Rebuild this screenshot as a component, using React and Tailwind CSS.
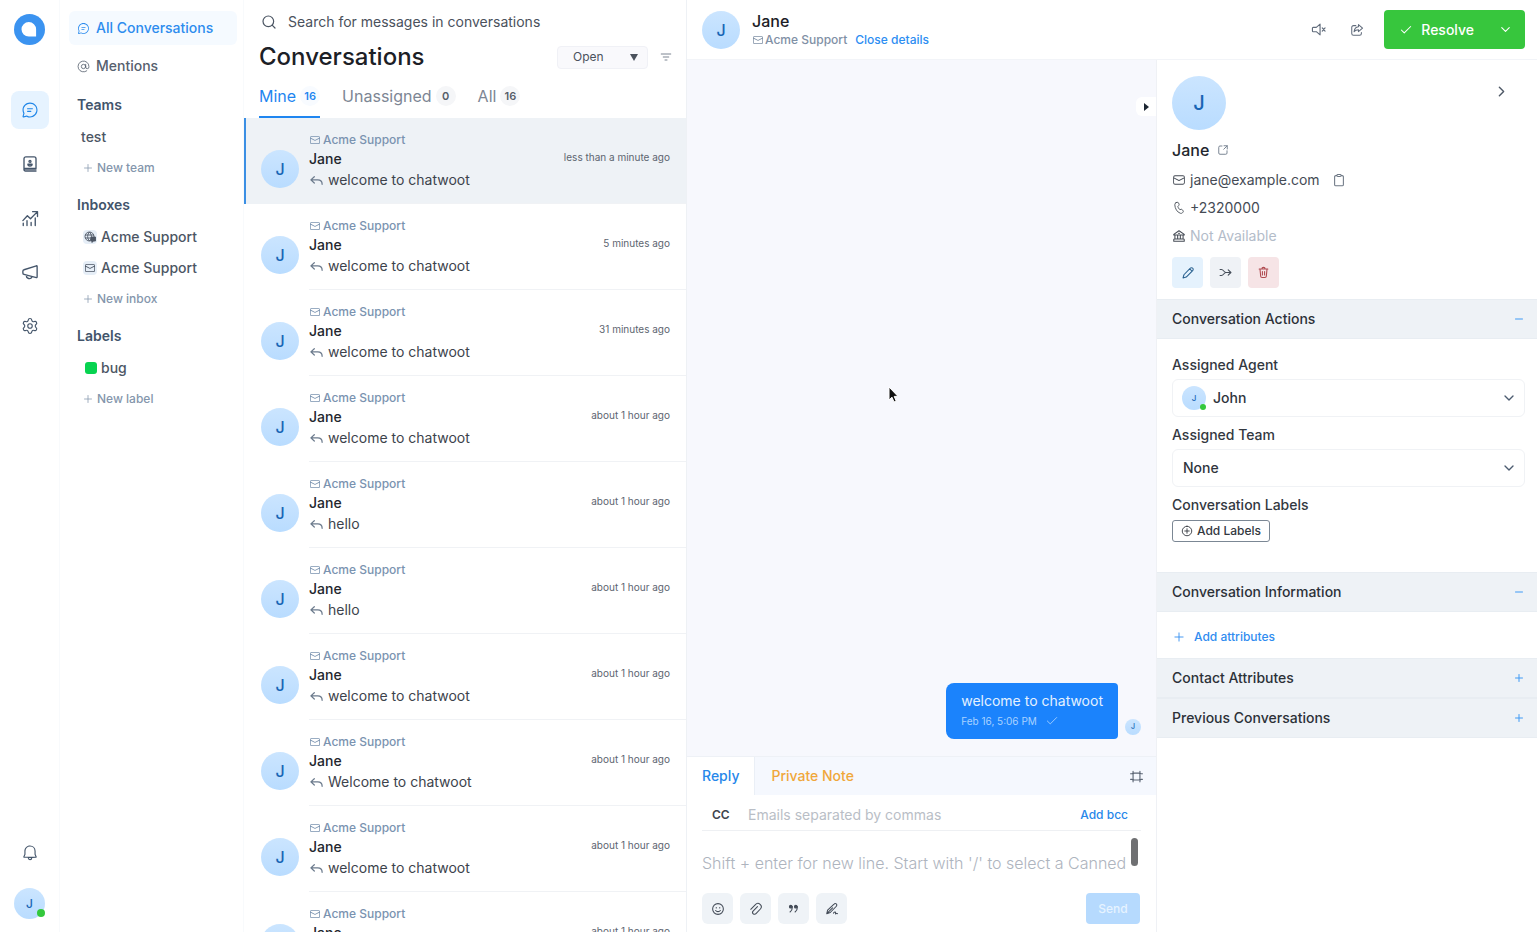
import { AtSign, Check, ChevronDown, ChevronRight, Minus, Plus, Search, Settings } from 'lucide-react'

const conversations = [
  { id: 1, message: 'welcome to chatwoot', time: 'less than a minute ago', active: true },
  { id: 2, message: 'welcome to chatwoot', time: '5 minutes ago' },
  { id: 3, message: 'welcome to chatwoot', time: '31 minutes ago' },
  { id: 4, message: 'welcome to chatwoot', time: 'about 1 hour ago' },
  { id: 5, message: 'hello', time: 'about 1 hour ago' },
  { id: 6, message: 'hello', time: 'about 1 hour ago' },
  { id: 7, message: 'welcome to chatwoot', time: 'about 1 hour ago' },
  { id: 8, message: 'Welcome to chatwoot', time: 'about 1 hour ago' },
  { id: 9, message: 'welcome to chatwoot', time: 'about 1 hour ago' },
  { id: 10, message: 'welcome to chatwoot', time: 'about 1 hour ago' },
]

const FILLED = {
  mail: 'M5.25 4h13.5a3.25 3.25 0 0 1 3.245 3.066L22 7.25v9.5a3.25 3.25 0 0 1-3.066 3.245L18.75 20H5.25a3.25 3.25 0 0 1-3.245-3.066L2 16.75v-9.5a3.25 3.25 0 0 1 3.066-3.245L5.25 4ZM20.5 9.373l-8.15 4.29a.75.75 0 0 1-.603.043l-.096-.042L3.5 9.374v7.376a1.75 1.75 0 0 0 1.606 1.744l.144.006h13.5a1.75 1.75 0 0 0 1.744-1.607l.006-.143V9.373ZM18.75 5.5H5.25a1.75 1.75 0 0 0-1.744 1.606L3.5 7.25v.429l8.5 4.473 8.5-4.474V7.25a1.75 1.75 0 0 0-1.607-1.744L18.75 5.5Z',
  chat: 'M12 2c5.523 0 10 4.477 10 10s-4.477 10-10 10a9.96 9.96 0 0 1-4.587-1.112l-3.826 1.067a1.25 1.25 0 0 1-1.54-1.54l1.068-3.823A9.96 9.96 0 0 1 2 12C2 6.477 6.477 2 12 2Zm0 1.5A8.5 8.5 0 0 0 3.5 12c0 1.47.373 2.883 1.073 4.137l.15.27-1.112 3.984 3.987-1.112.27.15A8.5 8.5 0 1 0 12 3.5ZM8.75 13h4.498a.75.75 0 0 1 .102 1.493l-.102.007H8.75a.75.75 0 0 1-.102-1.493L8.75 13Zm0-3.5h6.505a.75.75 0 0 1 .101 1.493l-.101.007H8.75a.75.75 0 0 1-.102-1.493L8.75 9.5Z',
  bell: 'M12 1.996a7.49 7.49 0 0 1 7.496 7.25l.004.25v4.097l1.38 3.156a1.249 1.249 0 0 1-1.145 1.75L15 18.502a3 3 0 0 1-5.995.177L9 18.499H4.275a1.251 1.251 0 0 1-1.147-1.747L4.5 13.594V9.496c0-4.155 3.352-7.5 7.5-7.5ZM13.5 18.5l-3 .002a1.5 1.5 0 0 0 2.993.145l.006-.147ZM12 3.496c-3.32 0-6 2.674-6 6v4.41L4.656 17h14.697L18 13.907V9.509l-.004-.225A5.988 5.988 0 0 0 12 3.496Z',
}

const STROKED = {
  contacts: 'M4 19.5V5a2.5 2.5 0 0 1 2.5-2.5h11A2.5 2.5 0 0 1 20 5v13H5.5A1.5 1.5 0 0 0 4 19.5 1.8 1.8 0 0 0 5.8 21.3H20M4 18.6h16M12 7.2a1.3 1.3 0 1 0 0 2.6 1.3 1.3 0 0 0 0-2.6ZM9.2 12.3h5.6c0 1.6-1.1 2.3-2.8 2.3s-2.8-.7-2.8-2.3Z',
  reports: 'M2.5 15.5 8.5 9l4.2 4L21 4.5M15.5 3.5H22V10M3 19v3M8 15.5V22M13.5 18v4M19 12v10',
  megaphone: 'M21.5 4.5v14.2a.8.8 0 0 1-1 .8L4 15.2a2 2 0 0 1-1.5-2v-2.3A2 2 0 0 1 4 9l16.5-5.3a.8.8 0 0 1 1 .8ZM7.5 16.3a3.6 3.6 0 0 0 7 1.8',
  reply: 'M8.5 6 3 11l5.5 5M3.500 11H14c4 0 7 2.500 7 7',
  mute: 'M14.5 3.5v17l-6-5h-5a1.2 1.2 0 0 1-1.2-1.2V9.700a1.200 1.200 0 0 1 1.200-1.200h5ZM18 9.500l4.500 5M22.500 9.500l-4.500 5',
  share: 'M10 4.5H6a3 3 0 0 0-3 3V18a3 3 0 0 0 3 3h10.500a3 3 0 0 0 3-3v-1.500M14.500 2.800l7 6-7 6v-3.300c-3.500 0-5.800 1-7.500 3.500.5-5 3-8 7.500-8.500Z',
  open: 'M10 4H6a2.500 2.500 0 0 0-2.500 2.500V18A2.500 2.500 0 0 0 6 20.500h11.500A2.500 2.500 0 0 0 20 18v-4.500M14 3.500h6.500V10M20.500 3.500l-7 7',
  clipboard: 'M8.500 4.500H6.500a2 2 0 0 0-2 2V20a2 2 0 0 0 2 2h11a2 2 0 0 0 2-2V6.500a2 2 0 0 0-2-2h-2M10 2.500h4a1.500 1.500 0 0 1 1.500 1.500v.5A1.500 1.500 0 0 1 14 6h-4a1.500 1.500 0 0 1-1.500-1.500V4A1.500 1.500 0 0 1 10 2.500Z',
  phone: 'M7 2.800 9 2.300a2 2 0 0 1 2.300 1.200l.8 2a2 2 0 0 1-.5 2.200l-1.500 1.500c.2 2 1.800 4.600 3.500 5.700l2-.6a2 2 0 0 1 2.200.8l1.200 1.700a2 2 0 0 1-.2 2.500l-.9.9a3.500 3.500 0 0 1-3.400.9C8.500 19.300 5 12.500 4.800 6.500A3.500 3.500 0 0 1 7 2.800Z',
  bank: 'M3 9.200 12 3l9 6.200v1H3ZM5 10.500V17M9.700 10.500V17M14.300 10.500V17M19 10.500V17M3 21v-2.500A1.500 1.500 0 0 1 4.500 17h15a1.500 1.500 0 0 1 1.500 1.500V21ZM11.500 7.500h1',
  pencil: 'm15 5 4 4M3.500 20.500 5 15 16 3.800a2.700 2.700 0 0 1 4 0 2.700 2.700 0 0 1 0 4L9 19Z',
  merge: 'M2 6.500h2.500c4 0 4.500 5.500 8.500 5.500h9M2 17.500h2.500c4 0 4.500-5.500 8.500-5.500M17 7l5 5-5 5',
  trash: 'M4 5.500h16M9 5.500a3 3 0 0 1 6 0M5.500 5.500 6.800 19a2.500 2.500 0 0 0 2.500 2.300h5.400a2.500 2.500 0 0 0 2.500-2.300L18.500 5.500M10 10v6.500M14 10v6.500',
  expand: 'M2.500 7.500h2a2 2 0 0 0 2-2v-2M21.500 7.500h-2a2 2 0 0 1-2-2v-2M2.500 16.500h2a2 2 0 0 1 2 2v2M21.500 16.500h-2a2 2 0 0 0-2 2v2M8.500 6.500h7a2 2 0 0 1 2 2v7a2 2 0 0 1-2 2h-7a2 2 0 0 1-2-2v-7a2 2 0 0 1 2-2Z',
  smile: 'M12 2.800a9.200 9.200 0 1 0 0 18.400 9.200 9.200 0 0 0 0-18.400ZM8 14.500c1.800 2.700 6.200 2.700 8 0M9 9.500v.6M15 9.500v.6',
  clip: 'm3 12.500 8-8a5.200 5.200 0 0 1 8.500 7.500l-7.500 8a3.300 3.300 0 0 1-5-4.500L14.500 8',
  sign: 'm3 20 1.500-6L15.500 3.500a2.700 2.700 0 0 1 4 3.800L9 18Zm11.500-1c2.500-3 4.500-2 3.500 1.500 1.200-1 2.300-1.200 3.500-.5M3 20l10-10',
  circleAdd: 'M12 2.500a9.500 9.500 0 1 0 0 19 9.500 9.500 0 0 0 0-19ZM12 7.500v9M7.500 12h9',
  filter: 'M2.500 6h19M6.500 12h11M10 18h4',
}

function Icon({ name, size = 16, stroke = 1.5, className = '' }) {
  const filled = FILLED[name]
  return (
    <svg
      width={size}
      height={size}
      viewBox="0 0 24 24"
      fill={filled ? 'currentColor' : 'none'}
      stroke={filled ? 'none' : 'currentColor'}
      strokeWidth={stroke}
      strokeLinecap="round"
      strokeLinejoin="round"
      className={`shrink-0 ${className}`}
      aria-hidden="true"
    >
      <path d={filled || STROKED[name]} />
    </svg>
  )
}

function Avatar({ className }) {
  return (
    <div className={`flex shrink-0 items-center justify-center rounded-full bg-linear-to-b from-[#cbe5ff] to-[#b9dcff] text-[#1865b5] ${className}`}>
      J
    </div>
  )
}

function RailButton({ label, active, children }) {
  return (
    <button
      aria-label={label}
      className={`flex size-[38px] items-center justify-center rounded-lg ${active ? 'bg-[#e6f3ff] text-[#1f86e8]' : 'text-[#45566b]'}`}
    >
      {children}
    </button>
  )
}

function Rail() {
  return (
    <aside className="flex w-[60px] shrink-0 flex-col items-center border-r border-[#f8fafc] pt-[14px] pb-[13px]">
      <svg width="31" height="31" viewBox="0 0 31 31" className="mb-[46px] shrink-0" role="img" aria-label="Chatwoot">
        <circle cx="15.5" cy="15.5" r="15.5" fill="#3b93f0" />
        <path d="M14.800 8a7.300 7.300 0 1 0 0 14.600h7.300v-7.300A7.300 7.300 0 0 0 14.800 8Z" fill="#fff" />
      </svg>
      <nav className="flex flex-col gap-4">
        <RailButton label="Conversations" active><Icon name="chat" size={18} /></RailButton>
        <RailButton label="Contacts"><Icon name="contacts" size={18} stroke={1.8} /></RailButton>
        <RailButton label="Reports"><Icon name="reports" size={18} stroke={1.8} /></RailButton>
        <RailButton label="Campaigns"><Icon name="megaphone" size={18} stroke={1.8} /></RailButton>
        <RailButton label="Settings"><Settings size={18} strokeWidth={1.5} /></RailButton>
      </nav>
      <div className="mt-auto flex flex-col items-center gap-4">
        <RailButton label="Notifications"><Icon name="bell" size={18} /></RailButton>
        <button aria-label="Profile" className="relative">
          <Avatar className="size-[31px] text-xs font-medium" />
          <span className="absolute right-0 bottom-0.5 size-2 rounded-full bg-[#34c83c]" />
        </button>
      </div>
    </aside>
  )
}

function SidebarSection({ title, addLabel, children }) {
  return (
    <section className="mt-[12px]">
      <h2 className="mb-[6px] pl-4 text-sm leading-5 font-semibold text-[#42546b]">{title}</h2>
      {children}
      <a href="#new" className="flex h-[31px] items-center gap-[3px] pl-[21px] text-xs font-medium text-[#8496ac]">
        <Plus size={12} strokeWidth={1.5} />
        {addLabel}
      </a>
    </section>
  )
}

function Sidebar() {
  const item = 'flex h-[31px] items-center pl-[22px] text-sm font-medium text-[#4c5664]'
  const tile = 'mr-1 flex size-[14px] items-center justify-center rounded-sm bg-[#e6eef7]'
  return (
    <aside className="w-[184px] shrink-0 border-r border-[#f8fafc] pt-[11px] pl-px">
      <a href="#all" className="ml-2 mr-1.5 flex h-[34px] items-center gap-1.5 rounded-md bg-[#f5faff] pl-2 text-sm font-medium text-[#2d8cee]">
        <Icon name="chat" size={13} />
        All Conversations
      </a>
      <a href="#mentions" className="mt-1 ml-2 flex h-[34px] items-center gap-1.5 pl-2 text-sm font-medium text-[#56606e]">
        <AtSign size={13} strokeWidth={1.5} />
        Mentions
      </a>
      <SidebarSection title="Teams" addLabel="New team">
        <a href="#test" className="flex h-[31px] items-center pl-5 text-sm font-medium text-[#4c5664]">test</a>
      </SidebarSection>
      <SidebarSection title="Inboxes" addLabel="New inbox">
        <a href="#web" className={item}>
          <span className={tile}>
            <svg width="12" height="12" viewBox="0 0 24 24" fill="none" stroke="currentColor" strokeWidth="1.8" aria-hidden="true">
              <circle cx="11" cy="11" r="9" />
              <path d="M2 8h18M2 14h18M11 2c-5 5-5 13 0 18M11 2c5 5 5 13 0 18" />
              <path d="M14 12h9v8h-4l-3 3v-3h-2Z" fill="currentColor" />
            </svg>
          </span>
          Acme Support
        </a>
        <a href="#email" className={item}>
          <span className={tile}><Icon name="mail" size={12} /></span>
          Acme Support
        </a>
      </SidebarSection>
      <SidebarSection title="Labels" addLabel="New label">
        <a href="#bug" className={item}>
          <span className="mr-1 ml-0.5 size-3 rounded-[3px] bg-[#07d350]" />
          bug
        </a>
      </SidebarSection>
    </aside>
  )
}

function Tab({ label, count, active }) {
  return (
    <button
      role="tab"
      aria-selected={!!active}
      className={`flex items-center gap-1 border-b-2 pb-[8px] leading-6 ${active ? 'border-[#1f86f0] text-[#1f86f0]' : 'border-transparent text-[#7d8694]'}`}
    >
      {label}
      <span className={`min-w-5 rounded-full px-1 text-center text-[11px] leading-5 font-semibold ${active ? 'bg-[#f8fbff] text-[#1f86f0]' : 'bg-[#f5f6f8] text-[#555d69]'}`}>
        {count}
      </span>
    </button>
  )
}

function ConversationCard({ conversation }) {
  const { message, time, active } = conversation
  return (
    <li className={`flex h-[86px] shrink-0 border-l-2 pl-[15px] ${active ? 'border-[#3b8fe4] bg-[#eef2f6]' : 'border-transparent'}`}>
      <Avatar className="mt-[32px] size-[38px] text-base font-medium" />
      <div className="ml-[10px] min-w-0 flex-1 border-b border-[#f0f2f5] pt-[13px]">
        <p className="flex items-center gap-0.5 text-xs leading-[18px] font-medium text-[#7a93b0]">
          <Icon name="mail" size={12} />
          Acme Support
        </p>
        <div className="flex items-start justify-between pr-4">
          <h3 className="text-sm leading-5 font-medium text-[#22262d]">Jane</h3>
          <time className="text-[10px] leading-4 text-[#5d6570]">{time}</time>
        </div>
        <p className="flex items-center gap-1 text-sm leading-[22px] text-[#3d434c]">
          <Icon name="reply" size={15} stroke={2} className="text-[#6b7a8c]" />
          {message}
        </p>
      </div>
    </li>
  )
}

function ConversationList() {
  return (
    <section className="flex w-[443px] shrink-0 flex-col border-r border-[#eef1f5]">
      <div className="shrink-0 pt-3 pl-[15px]">
        <label className="flex h-5 items-center gap-[11px] pl-0.5 text-[#4b5563]">
          <Search size={16} strokeWidth={1.8} />
          <input
            type="text"
            aria-label="Search"
            placeholder="Search for messages in conversations"
            className="flex-1 text-sm outline-none placeholder:text-[#4a515c]"
          />
        </label>
        <div className="mt-2 flex h-[34px] items-center pr-[14px]">
          <h1 className="flex-1 text-2xl font-medium text-[#1c2026]">Conversations</h1>
          <div className="relative flex">
            <select aria-label="Status" className="h-[23px] w-[91px] appearance-none rounded-[4px] border border-[#f0f1f6] bg-[#f9f9fc] pl-[15px] text-xs text-[#4b525d]">
              <option>Open</option>
            </select>
            <svg width="8" height="7" viewBox="0 0 8 7" className="pointer-events-none absolute top-2 right-[10px] fill-[#4b525d]" aria-hidden="true">
              <path d="M0 0h8L4 7Z" />
            </svg>
          </div>
          <button aria-label="Filter" className="ml-3 text-[#7c8592]"><Icon name="filter" size={12} stroke={2} /></button>
        </div>
        <div role="tablist" className="mt-[10px] flex gap-[22px]">
          <Tab label="Mine" count="16" active />
          <Tab label="Unassigned" count="0" />
          <Tab label="All" count="16" />
        </div>
      </div>
      <ul className="flex min-h-0 flex-1 flex-col overflow-hidden">
        {conversations.map((c) => (
          <ConversationCard key={c.id} conversation={c} />
        ))}
      </ul>
    </section>
  )
}

function ChatHeader() {
  return (
    <header className="flex h-[60px] shrink-0 items-center border-b border-[#f2f4f8] pr-3 pl-[15px]">
      <Avatar className="size-[38px] text-base font-medium" />
      <div className="ml-3 flex-1 pt-px">
        <h2 className="text-base leading-5 font-medium text-[#1c2026]">Jane</h2>
        <div className="flex items-center text-xs leading-[18px] font-medium">
          <Icon name="mail" size={12} className="mr-px text-[#7f90a5]" />
          <span className="text-[#7f90a5]">Acme Support</span>
          <button className="ml-2 text-[#2c8df2]">Close details</button>
        </div>
      </div>
      <button aria-label="Mute" className="mr-6 text-[#606b7b]"><Icon name="mute" size={15} stroke={1.8} /></button>
      <button aria-label="Share" className="mr-5 text-[#606b7b]"><Icon name="share" size={14} stroke={1.8} /></button>
      <div className="flex h-[39px] items-center rounded-[4px] bg-[#37c63d] text-white">
        <button className="flex h-full items-center gap-2 pl-[15px] text-sm font-medium">
          <Check size={14} strokeWidth={1.8} />
          Resolve
        </button>
        <button aria-label="More actions" className="ml-3 flex h-full items-center px-3">
          <ChevronDown size={15} strokeWidth={1.8} />
        </button>
      </div>
    </header>
  )
}

function ReplyBox() {
  const tool = 'flex size-[31px] items-center justify-center rounded-md bg-[#eff3f7] text-[#434b57]'
  return (
    <div className="shrink-0 border-t border-[#eef1f6] bg-white">
      <div role="tablist" className="flex h-[38px] bg-[#f5f8fe] text-sm font-medium">
        <button role="tab" aria-selected="true" className="bg-white px-[15px] text-[#2787ea]">Reply</button>
        <button role="tab" aria-selected="false" className="border-l border-[#eaeff6] px-4 text-[#f0a73a]">Private Note</button>
        <button aria-label="Expand" className="mr-3 ml-auto text-[#5c6675]"><Icon name="expand" size={15} stroke={1.8} /></button>
      </div>
      <div className="mx-[15px] flex h-[36px] items-center border-b border-[#eef0f3] pt-1">
        <label htmlFor="cc" className="w-[46px] pl-[10px] text-xs font-semibold text-[#3f454e]">CC</label>
        <input id="cc" placeholder="Emails separated by commas" className="min-w-0 flex-1 text-sm outline-none placeholder:text-[#b9bec6]" />
        <button className="pr-[13px] text-xs font-medium text-[#2787ea]">Add bcc</button>
      </div>
      <div className="flex h-[53px] pt-[7px] pr-[18px] pl-[15px]">
        <textarea
          aria-label="Message"
          rows={1}
          placeholder="Shift + enter for new line. Start with '/' to select a Canned"
          className="mt-[13px] h-6 min-w-0 flex-1 resize-none overflow-hidden text-base leading-6 font-light whitespace-nowrap outline-none placeholder:text-[#aeb4be]"
        />
        <div className="h-[28px] w-[7px] shrink-0 rounded-full bg-[#6f7072]" />
      </div>
      <div className="flex gap-[7px] pt-[9px] pr-4 pb-2 pl-[15px]">
        <button aria-label="Emoji" className={tool}><Icon name="smile" size={14} stroke={1.8} /></button>
        <button aria-label="Attach" className={tool}><Icon name="clip" size={14} stroke={1.8} /></button>
        <button aria-label="Canned responses" className={tool}>
          <svg width="11" height="11" viewBox="0 0 24 24" fill="none" stroke="currentColor" strokeWidth="2.400" strokeLinecap="round" aria-hidden="true">
            <path d="M9.500 8c0 6-1.500 9-5 11.500M20.500 8c0 6-1.500 9-5 11.500" />
            <circle cx="6" cy="8" r="2.800" fill="currentColor" />
            <circle cx="17" cy="8" r="2.800" fill="currentColor" />
          </svg>
        </button>
        <button aria-label="Signature" className={tool}><Icon name="sign" size={14} stroke={1.8} /></button>
        <button className="ml-auto h-[31px] w-[54px] rounded-[4px] bg-[#b6dafe] text-xs font-medium text-[#e6f3ff]">Send</button>
      </div>
    </div>
  )
}

function ChatPane() {
  return (
    <section className="relative flex min-w-0 flex-1 flex-col">
      <div className="flex min-h-0 flex-1 flex-col justify-end bg-[#f7f8fd] pb-[17px]">
        <div className="flex items-end justify-end gap-[7px] pr-[15px]">
          <div className="rounded-l-lg rounded-r-[4px] bg-[#1b83fc] px-[15px] pt-[7px] pb-[9px] text-[#e4f1ff]">
            <p className="text-sm leading-[22px]">welcome to chatwoot</p>
            <div className="flex items-center gap-2 text-[10px] leading-[18px] text-[#a9d2ff]">
              Feb 16, 5:06 PM
              <Check size={14} strokeWidth={1.5} />
            </div>
          </div>
          <Avatar className="mb-1 size-4 text-[7px] font-medium" />
        </div>
      </div>
      <ReplyBox />
      <button aria-label="Collapse panel" className="absolute top-[37px] right-0 flex h-[19px] w-5 items-center justify-center rounded-l-md bg-white">
        <svg width="5" height="8" viewBox="0 0 5 8" className="fill-[#1d2733]" aria-hidden="true"><path d="M0 0v8l5-4Z" /></svg>
      </button>
    </section>
  )
}

function PanelHeader({ title, open }) {
  return (
    <button aria-expanded={!!open} className="flex h-10 w-full items-center justify-between border-y border-[#e8edf2] bg-[#eef2f6] pr-3 pl-[15px] text-sm font-medium text-[#2c3138]">
      {title}
      {open ? <Minus size={12} className="text-[#3f9af5]" /> : <Plus size={12} className="text-[#3f9af5]" />}
    </button>
  )
}

function ContactPanel() {
  const select = 'h-[38px] w-full appearance-none rounded-md border border-[#f0f2f5] bg-white text-sm font-medium text-[#2f353d]'
  const label = 'block text-sm leading-5 font-medium text-[#33383f]'
  return (
    <aside className="w-[381px] shrink-0 overflow-hidden border-l border-[#eff1f5]">
      <div className="pt-4 pr-[27px] pb-[11px] pl-[15px]">
        <div className="flex items-start justify-between">
          <Avatar className="size-[54px] text-xl font-medium" />
          <button aria-label="Close" className="mt-[7px] text-[#4f5967]"><ChevronRight size={17} /></button>
        </div>
        <h2 className="mt-[10px] flex items-center gap-2 text-base leading-5 font-medium text-[#22262d]">
          Jane
          <a href="#contact" aria-label="Open contact"><Icon name="open" size={12} stroke={2} className="text-[#7b8694]" /></a>
        </h2>
        <p className="mt-[6px] flex h-7 items-center text-sm text-[#454b55]">
          <Icon name="mail" size={14} />
          <a href="mailto:jane@example.com" className="ml-1">jane@example.com</a>
          <button aria-label="Copy" className="ml-3 text-[#6d7784]"><Icon name="clipboard" size={14} stroke={1.8} /></button>
        </p>
        <p className="flex h-7 items-center gap-1 text-sm text-[#454b55]">
          <Icon name="phone" size={14} />
          +2320000
        </p>
        <p className="flex h-7 items-center gap-1 text-sm text-[#b3bcc9]">
          <Icon name="bank" size={14} stroke={1.8} className="text-[#454b55]" />
          Not Available
        </p>
        <div className="mt-[7px] flex gap-[7px]">
          <button aria-label="Edit" className="flex size-[31px] items-center justify-center rounded-[4px] bg-[#e5f2fd] text-[#28608f]"><Icon name="pencil" size={14} stroke={1.8} /></button>
          <button aria-label="Merge" className="flex size-[31px] items-center justify-center rounded-[4px] bg-[#eff2f6] text-[#464e5a]"><Icon name="merge" size={13} stroke={2} /></button>
          <button aria-label="Delete" className="flex size-[31px] items-center justify-center rounded-[4px] bg-[#f6e4e6] text-[#b04a50]"><Icon name="trash" size={13} stroke={2} /></button>
        </div>
      </div>

      <PanelHeader title="Conversation Actions" open />
      <div className="pt-4 pr-3 pb-[30px] pl-[15px]">
        <label htmlFor="agent" className={label}>Assigned Agent</label>
        <div className="relative mt-1">
          <select id="agent" className={`${select} pl-[40px]`}>
            <option>John</option>
          </select>
          <div className="pointer-events-none absolute top-[7px] left-[10px]">
            <Avatar className="size-6 text-[8px] font-medium" />
            <span className="absolute right-0 bottom-0 size-1.5 rounded-full bg-[#34c83c]" />
          </div>
          <ChevronDown size={16} className="pointer-events-none absolute top-[11px] right-2 text-[#4c5b70]" />
        </div>
        <label htmlFor="team" className={`${label} mt-2`}>Assigned Team</label>
        <div className="relative mt-1">
          <select id="team" className={`${select} pl-[10px]`}>
            <option>None</option>
          </select>
          <ChevronDown size={16} className="pointer-events-none absolute top-[11px] right-2 text-[#4c5b70]" />
        </div>
        <h3 className={`${label} mt-2`}>Conversation Labels</h3>
        <button className="mt-[5px] flex h-[22px] items-center gap-1 rounded-[3px] border border-[#7b8794] px-2 text-xs font-medium text-[#33383f]">
          <Icon name="circleAdd" size={12} stroke={1.8} />
          Add Labels
        </button>
      </div>

      <PanelHeader title="Conversation Information" open />
      <button className="flex h-[46px] items-center gap-2 pt-1 pl-[15px] text-xs font-medium text-[#2f8cf0]">
        <Plus size={14} strokeWidth={1.5} />
        Add attributes
      </button>
      <PanelHeader title="Contact Attributes" />
      <PanelHeader title="Previous Conversations" />
    </aside>
  )
}

export default function App() {
  return (
    <div className="relative flex h-screen overflow-hidden bg-white font-['Inter',sans-serif]">
      <Rail />
      <Sidebar />
      <ConversationList />
      <main className="flex min-w-0 flex-1 flex-col">
        <ChatHeader />
        <div className="flex min-h-0 flex-1">
          <ChatPane />
          <ContactPanel />
        </div>
      </main>
      <svg width="11" height="17" viewBox="0 0 11 17" className="pointer-events-none absolute top-[386px] left-[888px]" aria-hidden="true">
        <path d="M1 1v13l3-2.800 2 4.800 2.200-1-2-4.600H10Z" fill="#111" stroke="#fff" />
      </svg>
    </div>
  )
}
